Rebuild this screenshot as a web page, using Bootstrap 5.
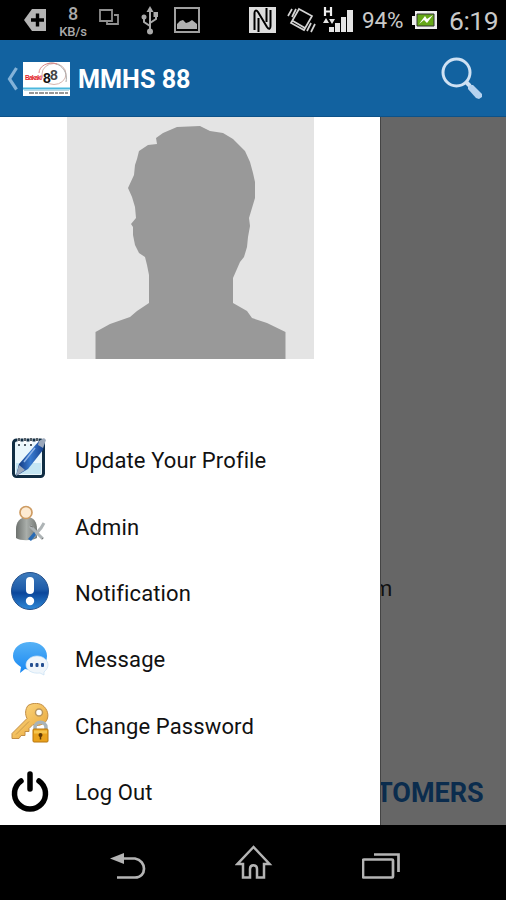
<!DOCTYPE html>
<html lang="en">
<head>
<meta charset="utf-8">
<meta name="viewport" content="width=device-width, initial-scale=1">
<title>MMHS 88</title>
<link href="https://cdn.jsdelivr.net/npm/bootstrap@5.3.0/dist/css/bootstrap.min.css" rel="stylesheet">
<style>
body{font-family:Roboto,"Noto Sans",sans-serif;background:#000;color:#111}
.phone{width:506px;height:900px}
.status{height:40px;background:#000;color:#c9c9c9;padding-left:24px}
.status svg,.appbar svg,.keys svg,.drawer svg{display:block;flex:none}
.cell{flex:none;white-space:nowrap}
.c-tag{width:34px}.c-rate{width:41px;color:#aaa;font-weight:500;padding-top:2px}
.rate-n{font-size:18px;line-height:21px;width:30px;text-align:center}
.rate-u{font-size:13px;line-height:16px;width:30px;text-align:center;letter-spacing:-.2px}
.c-win{width:42px}.c-usb{width:32px}.c-img{width:76px}.c-nfc{width:38px}.c-vib{width:36px}.c-sig{width:39px}
.c-pct{width:49px;font-size:22.5px;letter-spacing:-.2px;padding-top:2px}.c-bat{width:38px}
.c-clock{font-size:26.5px;letter-spacing:-.5px;padding-top:2px}
.appbar{height:77px;background:#1262a0;border-bottom:1px solid #0d5289;padding:2px 22px 0 7px}
.title-text{font-size:25.2px;font-weight:700;color:#fff;margin-left:8px;line-height:1;padding-top:2px}
.stage{height:708px;background:#666}
.drawer{width:381px;background:#fff;border-right:1px solid #444}
.avatar{margin-left:67px;margin-bottom:68px}
.entry{height:66.4px;padding:0 0 2px 10px;border:0;font-size:22px;line-height:1;color:#111;background:#fff}
.entry-label{margin-left:25px;padding-top:4px;letter-spacing:.12px}
.behind{padding-top:459px}
.mail-end{font-size:22px;line-height:26px;margin-left:-8px;color:#111}
.customers{font-size:27px;font-weight:700;line-height:30px;margin-top:176px;margin-left:-5px;color:#0b2c4d}
.keys{height:75px;background:#000;padding-left:110px;padding-top:18px}
.k-back{margin-right:89px}.k-home{margin-right:89px}
</style>
</head>
<body>
<div class="phone d-flex flex-column overflow-hidden">
  <div class="status d-flex align-items-center">
    <div class="cell c-tag"><svg width="23" height="26" viewBox="0 0 23 26"><path d="M0 13 8 2h14v22H8z" fill="#b4b4b4"/><path d="M13.500 6.500v13M7 13h13" stroke="#000" stroke-width="3.400"/></svg></div>
    <div class="cell c-rate"><div class="rate-n">8</div><div class="rate-u">KB/s</div></div>
    <div class="cell c-win"><svg width="21" height="28" viewBox="0 0 21 28"><path d="M1 4h12v11H1zM15 9h4v9H8v-2" fill="none" stroke="#909090" stroke-width="1.800"/></svg></div>
    <div class="cell c-usb"><svg width="17" height="30" viewBox="0 0 17 30"><g fill="none" stroke="#aaa" stroke-width="2"><path d="M9 4v22M9 21l-6-4v-5M9 18l6-4V9"/></g><g fill="#aaa"><path d="M5.500 7 9 1l3.500 6z"/><circle cx="3" cy="12" r="2.500"/><path d="M12.500 7h4.500v5h-4.500z"/><circle cx="9" cy="26.500" r="3"/></g></svg></div>
    <div class="cell c-img"><svg width="28" height="28" viewBox="0 0 28 28"><path d="M2 2h24v24H2z" fill="#000" stroke="#a0a0a0" stroke-width="2"/><path d="M4 23v-5l3-3 3-1 3 3 3-1 3-2 5 4v5z" fill="#b0b0b0"/></svg></div>
    <div class="cell c-nfc"><svg width="27" height="28" viewBox="0 0 27 28"><path d="M0 1h27v26H0z" fill="#ddd"/><path d="M5.500 24V7c0-3 2-3 3.500-1l9 15c2 3 3.500 2 3.500-1V4M9.500 26V12M17.500 2v14" fill="none" stroke="#000" stroke-width="2"/></svg></div>
    <div class="cell c-vib"><svg width="29" height="28" viewBox="0 0 29 28"><g fill="none" stroke="#d5d5d5" stroke-width="1.700"><path d="m12 3 13 7-8 14-13-7zM6 15l12 7M1 10l4-7M5 11l4-8M20 25l4-8M24 26l4-8"/></g></svg></div>
    <div class="cell c-sig"><svg width="31" height="28" viewBox="0 0 31 28"><path d="M2 1v9M8 1v9M2 5.500h6" stroke="#eee" stroke-width="2.200"/><path d="m0 17 3-5 3 5zM6 13h6l-3 5zM6 21h5v5H6zM12 17h5v9h-5zM18 11h5v15h-5zM24 4h6v22h-6z" fill="#e4e4e4"/></svg></div>
    <div class="cell c-pct">94%</div>
    <div class="cell c-bat"><svg width="28" height="20" viewBox="0 0 28 20"><path d="M4 1h22v18H4v-4H1V6h3z" fill="#eee"/><path d="M6 4h17v12H6z" fill="#65a817" stroke="#333"/><path d="m8 14 6-8 2 3 6-4-6 8-3-3z" fill="#fff"/></svg></div>
    <div class="cell c-clock">6:19</div>
  </div>

  <header class="appbar d-flex align-items-center">
    <svg width="12" height="26" viewBox="0 0 12 26"><path d="M9.500 2 2.500 13l7 10.500" fill="none" stroke="#83b2d8" stroke-width="3.200"/></svg>
    <svg width="47" height="34" viewBox="0 0 47 34" class="ms-1">
      <path d="M0 0h47v34H0z" fill="#fff"/>
      <g fill="none"><ellipse cx="31" cy="12" rx="12" ry="10.500" stroke="#d5b5ae"/><path d="M24 2c8-4 22 4 19 18" stroke="#aaa"/><path d="M16 11c0-7 9-12 18-9" stroke="#d88"/></g>
      <text x="2" y="17.500" font-family="Liberation Sans,sans-serif" font-size="6.500" font-weight="700" fill="#e31e2b" textLength="17">Bakaki</text>
      <text x="20" y="21" font-family="Liberation Sans,sans-serif" font-size="14" font-weight="700" fill="#111">8</text>
      <text x="27" y="18" font-family="Liberation Sans,sans-serif" font-size="14" font-weight="700" fill="#444">8</text>
      <path d="M0 26.500h47" stroke="#4bb7dd" stroke-width="2"/><path d="M1 28.500h45" stroke="#b8d9e5"/><path d="M6 31h39" stroke="#777" stroke-width="1.500" stroke-dasharray="5 1 3 1"/>
    </svg>
    <h1 class="title-text mb-0">MMHS 88</h1>
    <svg class="ms-auto" width="43" height="44" viewBox="0 0 43 44"><circle cx="15.500" cy="15.500" r="13.500" fill="none" stroke="#cfe1f3" stroke-width="3"/><path d="m25 25 4 4" stroke="#cfe1f3" stroke-width="4"/><path d="m29 28 3 0 9 9v3l-3 2-3-1-8-9v-2z" fill="#b5d2ef"/></svg>
  </header>

  <main class="stage d-flex">
    <nav class="drawer flex-shrink-0">
      <svg class="avatar" width="247" height="242" viewBox="0 0 247 242"><path d="M0 0h247v242H0z" fill="#e4e4e4"/><path d="M28.500 242V215L43 207 63 200 70 194 82 186V158L80 148 78 140 72 136 68 128 66 118V110L64 107 69 101 68 90 65 80 61 71 67 58 68 48 70 42 72 34 81 28 90 27 89 21 96 16 110 10 133 9 143 14 156 16 166 22 178 34 183 45 186 56 188 65V81L185 91 182 101 183 109 181 120 180 130 177 140 173 145 166 161V186L180 194 185 201 200 206 218.500 215V242z" fill="#999"/></svg>
      <div class="list-group list-group-flush">
        <a href="#" class="list-group-item entry d-flex align-items-center">
          <svg width="40" height="44" viewBox="1 2 40 44"><defs><linearGradient id="pen"><stop stop-color="#0c2d72"/><stop offset=".5" stop-color="#397bd0"/><stop offset="1" stop-color="#123a86"/></linearGradient></defs><rect x="4.500" y="5" width="30" height="36.500" rx="3" fill="#eaf7fc" stroke="#102d43" stroke-width="3"/><path d="M7 28h25v11H7z" fill="#c5e6f3"/><path d="M10 3v6M16 3v6M22 3v6M28 3v6" stroke="#fff" stroke-width="3"/><path d="M10 3v3m6-3v3m6-3v3m6-3v3M10 9v2m6-2v2m6-2v2" stroke="#35414a" stroke-width="1.700"/><path d="m30 6 6 1-2 8-15 19-12 7 3-12z" fill="url(#pen)"/><path d="m30 6 5-3 2 2-3 8-5-3zM10 30l6 5-9 6z" fill="#9ba8bb"/><path d="m26 13-11 14" stroke="#91b5e7" stroke-width="1.500"/></svg>
          <span class="entry-label">Update Your Profile</span></a>
        <a href="#" class="list-group-item entry d-flex align-items-center">
          <svg width="40" height="44" viewBox="0 2 40 44"><defs><linearGradient id="body"><stop stop-color="#6d716e"/><stop offset=".5" stop-color="#a9aeaa"/><stop offset="1" stop-color="#777b78"/></linearGradient></defs><path d="M6 36V27c0-7 4-12 11-12s10 5 10 12v9c-5 3-17 3-21 0z" fill="url(#body)"/><circle cx="16" cy="10.500" r="6" fill="#fdebd3" stroke="#ce9c63" stroke-width="1.700"/><path d="m20 24 13 13M34 21l-3 5-8 9" stroke="#aeb4b6" stroke-width="3" fill="none"/><path d="m18 37 6-7 2 3-5 6z" fill="#286bb5"/><path d="m20 24 3 1m9 11 1 1" stroke="#777"/></svg>
          <span class="entry-label">Admin</span></a>
        <a href="#" class="list-group-item entry d-flex align-items-center">
          <svg width="40" height="44" viewBox="0 0 40 44"><defs><linearGradient id="ball" x2="0" y2="1"><stop stop-color="#3e7cbd"/><stop offset=".45" stop-color="#1f5ca9"/><stop offset=".55" stop-color="#0b469b"/><stop offset="1" stop-color="#2f8ad8"/></linearGradient></defs><circle cx="20" cy="21" r="18.500" fill="url(#ball)" stroke="#234f8b"/><rect x="16" y="7" width="8" height="17" rx="4" fill="#fff"/><circle cx="20" cy="31" r="4.200" fill="#fff"/></svg>
          <span class="entry-label">Notification</span></a>
        <a href="#" class="list-group-item entry d-flex align-items-center">
          <svg width="40" height="44" viewBox="0 -1 40 44"><defs><linearGradient id="talk" x2="0" y2="1"><stop stop-color="#56b2f6"/><stop offset="1" stop-color="#1887f2"/></linearGradient></defs><path d="M20 5c10 0 17 6 17 14s-7 14-17 14l-5-1-5 4 1-6C6 27 3 23 3 19 3 11 10 5 20 5z" fill="url(#talk)"/><path d="M27 19c6 0 11 4 11 9 0 3-2 5-4 7v3l-4-2c-8 1-14-3-14-8s5-9 11-9z" fill="#f0f6fb" stroke="#c5dff3" stroke-width=".7"/><g fill="#244f91"><rect x="20" y="26" width="3" height="4" rx="1"/><rect x="25.500" y="26" width="3" height="4" rx="1"/><rect x="31" y="26" width="3" height="4" rx="1"/></g></svg>
          <span class="entry-label">Message</span></a>
        <a href="#" class="list-group-item entry d-flex align-items-center">
          <svg width="40" height="44" viewBox="0 1.500 40 44"><defs><linearGradient id="gold" x2="1" y2="1"><stop stop-color="#ffdf8d"/><stop offset="1" stop-color="#e6a02f"/></linearGradient></defs><path d="M18 4c5-3 12-3 16 1 5 5 5 12 1 16-4 3-9 4-12 2l-4 4v3h-4v4h-4l-2 3H2v-5l15-15c-2-4-2-9 1-13z" fill="url(#gold)" stroke="#c28e46"/><circle cx="29" cy="11" r="3.500" fill="#fff" stroke="#b9965e" stroke-width="1.500"/><path d="m6 33 13-13" stroke="#c99a4d" stroke-width="1"/><path d="M25 29v-3c0-7 11-7 11 0v3" fill="none" stroke="#a8b3b9" stroke-width="3.500"/><rect x="23" y="27.500" width="15" height="13" rx="1" fill="#e9a21d" stroke="#b8770f"/><path d="M24 29h13v3H24z" fill="#f5c44c"/><circle cx="30.500" cy="33.500" r="2" fill="#5e3909"/><path d="M30.500 34v4" stroke="#5e3909" stroke-width="1.500"/></svg>
          <span class="entry-label">Change Password</span></a>
        <a href="#" class="list-group-item entry d-flex align-items-center">
          <svg width="40" height="44" viewBox="0 0 40 44"><path d="M11 12a15.500 15.500 0 1 0 18 0M20 5v15" fill="none" stroke="#000" stroke-width="5.500" stroke-linecap="round"/></svg>
          <span class="entry-label">Log Out</span></a>
      </div>
    </nav>
    <section class="behind overflow-hidden flex-grow-1 text-nowrap">
      <div class="mail-end">m</div>
      <div class="customers">TOMERS</div>
    </section>
  </main>

  <footer class="keys d-flex">
    <svg class="k-back" width="36" height="40" viewBox="0 0 36 40"><path d="M12 15.500h13c12 2 12 19 0 19H7" fill="none" stroke="#b4b4b4" stroke-width="2.700"/><path d="M0 15.500 14 10v11z" fill="#b4b4b4"/></svg>
    <svg class="k-home" width="38" height="40" viewBox="0 0 38 40"><path d="M18.500 4 2.500 21H8v13.500h7V26c0-5 7-5 7 0v8.500h7V21h5.500z" fill="none" stroke="#b4b4b4" stroke-width="2.500"/></svg>
    <svg width="40" height="40" viewBox="1 0 40 40"><rect x="2" y="16.500" width="30" height="18" rx="1" fill="none" stroke="#b4b4b4" stroke-width="2.700"/><path d="M13 11.500h24.500V29" fill="none" stroke="#b4b4b4" stroke-width="2.700"/></svg>
  </footer>
</div>
<script src="https://cdn.jsdelivr.net/npm/bootstrap@5.3.0/dist/js/bootstrap.bundle.min.js"></script>
</body>
</html>
